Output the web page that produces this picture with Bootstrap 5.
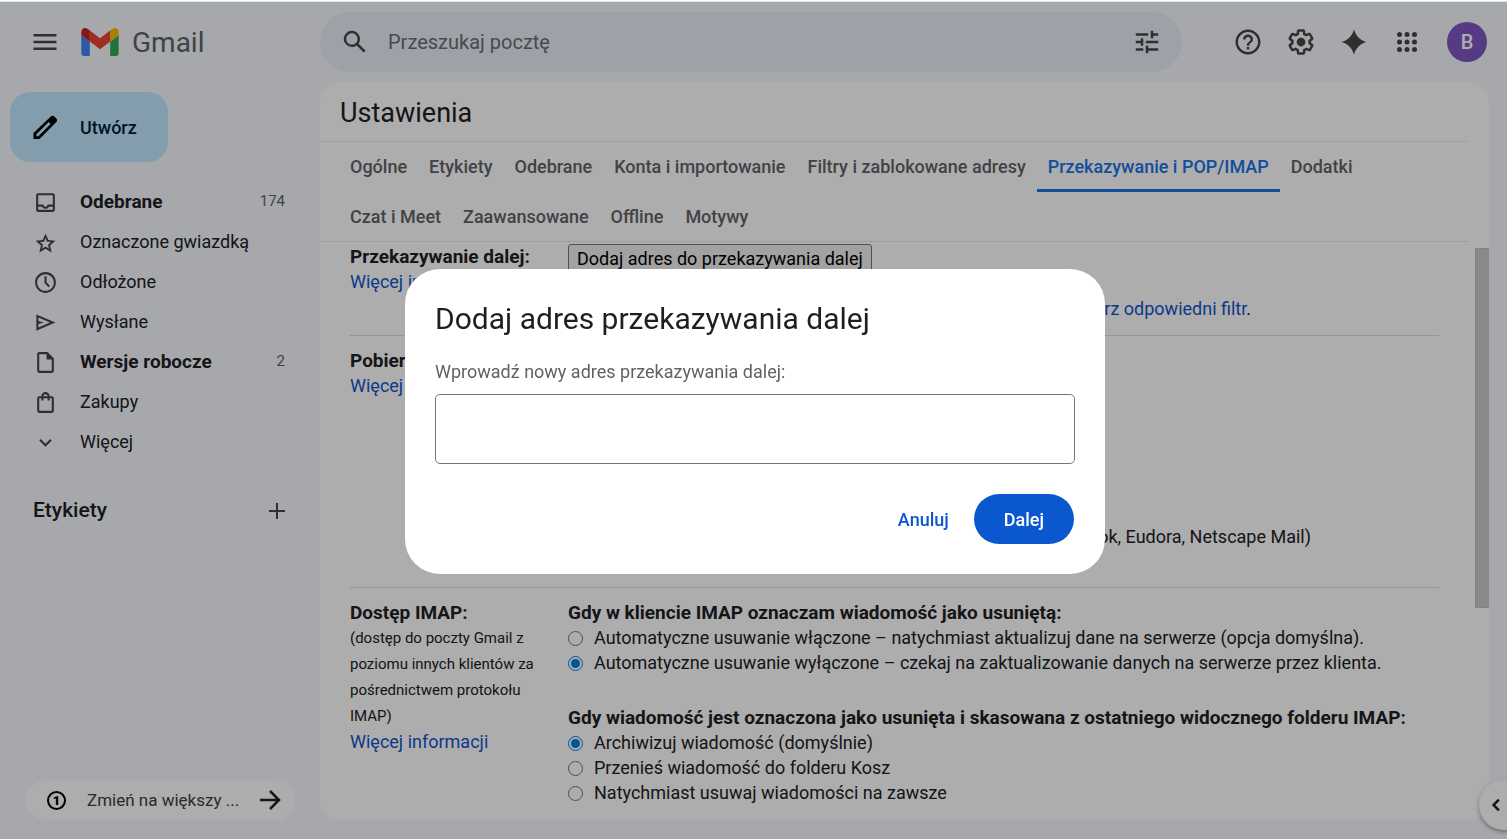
<!DOCTYPE html>
<html lang="pl">
<head>
<meta charset="utf-8">
<meta name="viewport" content="width=device-width, initial-scale=1">
<title>Ustawienia – Gmail</title>
<link href="https://cdn.jsdelivr.net/npm/bootstrap@5.3.0/dist/css/bootstrap.min.css" rel="stylesheet">
<style>
  body { font-family: Roboto, "Liberation Sans", sans-serif; font-size: 18px; line-height: 25px; color: #202124; background: #f6f8fc; }
  svg { display: block; flex: none; fill: currentColor; }
  a { text-decoration: none; }
  b { font-size: 19px; }
  .shrinkable { min-width: 0; min-height: 0; }
  .window-edge { height: 2px; background: #fff; border-bottom: 1px solid #dfe5e4; position: relative; z-index: 1100; }
  .app-header { height: 80px; color: #444746; }
  .side-width { width: 320px; flex: none; }
  .tools-width { width: 325px; flex: none; }
  .tools { gap: 3px; }
  .icon-btn { border: 0; background: none; padding: 10px; color: inherit; }
  .menu-btn { padding: 4px; margin: 0 15px 0 24px; }
  .brand { gap: 13px; }
  .brand-name { font-size: 28px; line-height: 32px; padding-top: 2px; color: #5f6368; }
  .search-bar { height: 60px; background: #eaedf9; border-radius: 30px; padding: 0 10px; }
  .search-bar input { border: 0; background: none; font-size: 20px; color: #444746; outline: 0; }
  .search-bar input::placeholder { color: #6a6d70; opacity: 1; }
  .avatar { width: 40px; height: 40px; background: #7e57c2; color: #fff; font-size: 20px; font-weight: 500; border: 0; margin-left: 12px; }
  .compose { width: 158px; height: 70px; margin: 10px 0 20px 10px; gap: 20px; border: 0; border-radius: 20px; background: #c2e7ff; color: #001d35; font-weight: 500; padding: 0 20px; }
  .folder { height: 40px; gap: 22px; color: #202124; padding: 0 35px 0 33px; }
  .folder span { padding-bottom: 2px; }
  .folder svg { color: #444746; }
  .folder.fw-bold { font-size: 19px; }
  .folder .count { font-size: 15px; font-weight: 400; color: #5f6368; }
  .labels-row { margin-top: 29px; }
  .labels-heading { font-size: 21px; font-weight: 500; }
  .upgrade { height: 40px; margin: 0 25px 19px 26px; padding: 0 13px 0 21px; gap: 21px; border: 0; border-radius: 20px; background: #fff; color: #3c4043; font-size: 17px; }
  .upgrade svg { margin-left: -10px; }
  .ring { flex: none; width: 19px; height: 19px; border: 2px solid #000; color: #000; font-size: 13px; line-height: 15px; font-weight: 900; }
  .panel { background: #fff; border-radius: 20px; margin: 0 18px 19px 0; }
  .panel-title { font-size: 27px; line-height: 55px; font-weight: 400; padding: 4px 0 0 20px; border-bottom: 1px solid #e8eaed; margin-right: 22px; }
  .tabs { padding: 0 19px; margin-right: 20px; box-shadow: inset 0 -1px #e8eaed; }
  .tabs a { height: 50px; line-height: 50px; padding: 0 11px; color: #5f6368; font-weight: 500; }
  .tabs a.active { color: #1a73e8; box-shadow: inset 0 -3px #1a73e8; }
  .settings { padding-left: 30px; }
  .setting { padding: 12px 0; border-bottom: 1px solid #dadce0; }
  .setting:first-child { padding: 2px 0 14px; }
  .setting:last-child { border: 0; }
  .setting-name { width: 218px; flex: none; padding-right: 28px; }
  .setting a { color: #1155cc; }
  .tip { width: 683px; }
  .pop-body { width: 743px; min-height: 227px; padding-bottom: 26px; }
  .note { font-size: 15px; line-height: 26px; }
  .add-address { height: 28px; padding: 0 8px; border: 1px solid #767676; border-radius: 3px; background: #efefef; color: #000; }
  .option input { width: 15px; height: 15px; margin: 2px 11px 0 0; accent-color: #007fdb; }
  .option-group { margin-top: 30px; }
  .scroll-track { width: 14px; flex: none; margin-left: 36px; padding-top: 6px; }
  .scroll-thumb { height: 63%; background: #cbcbcb; border: solid #c0c0c0; border-width: 1px 0 1px 1px; }
  .panel-toggle { position: fixed; right: -22px; bottom: 9px; width: 50px; height: 50px; border: 0; background: #fff; color: #202124; box-shadow: 0 2px 4px rgba(0,0,0,.35); padding: 0 0 0 5px; }
  .modal-backdrop { --bs-backdrop-opacity: .32; }
  .modal { padding: 4px 0 0 3px; }
  .modal-dialog { max-width: 700px; }
  .modal-content { border: 0; border-radius: 35px; padding: 30px; color: #1f1f1f; }
  .modal-title { font-size: 30px; line-height: 40px; font-weight: 400; }
  .modal label { color: #5f6368; margin: 20px 0 10px; }
  .modal .form-control { height: 70px; border: 1px solid #747775; border-radius: 5px; font-size: 20px; }
  .dialog-buttons { margin-top: 30px; padding-right: 1px; }
  .cancel, .confirm { height: 50px; border: 0; border-radius: 25px; font-weight: 500; }
  .cancel { background: none; color: #0b57d0; padding: 0 25px; }
  .confirm { background: #0b57d0; color: #fff; padding: 0 30px; }
</style>
</head>
<body class="overflow-hidden">
<div class="vh-100 d-flex flex-column">
  <div class="window-edge"></div>
  <header class="app-header d-flex align-items-center flex-shrink-0">
    <div class="side-width d-flex align-items-center">
      <button class="icon-btn menu-btn" aria-label="Menu główne"><svg width="34" height="30" viewBox="0 0 34 30"><path d="M5.500 7h23v2.500h-23zM5.500 13.700h23v2.500h-23zM5.500 20.400h23v2.500h-23z"/></svg></button>
      <a href="#" class="brand d-flex align-items-center">
        <svg width="38" height="28" viewBox="52 42 88 66"><path fill="#4285f4" d="M58 108h14V74L52 59v43c0 3.320 2.690 6 6 6"/><path fill="#34a853" d="M120 108h14c3.320 0 6-2.690 6-6V59l-20 15"/><path fill="#fbbc04" d="M120 48v26l20-15v-8c0-7.420-8.470-11.650-14.400-7.200"/><path fill="#ea4335" d="M72 74V48l24 18 24-18v26L96 92"/><path fill="#c5221f" d="M52 51v8l20 15V48l-5.600-4.200c-5.940-4.450-14.400-.22-14.400 7.200"/></svg>
        <span class="brand-name">Gmail</span>
      </a>
    </div>
    <form class="search-bar d-flex align-items-center flex-grow-1">
      <button type="button" class="icon-btn" aria-label="Szukaj"><svg width="30" height="30" viewBox="0 0 24 24"><path d="M20.490 19l-5.730-5.730C15.530 12.200 16 10.910 16 9.500A6.500 6.500 0 1 0 9.500 16c1.410 0 2.700-.47 3.770-1.240L19 20.490 20.490 19zM5 9.500C5 7.010 7.010 5 9.500 5S14 7.010 14 9.500 11.990 14 9.500 14 5 11.990 5 9.500z"/></svg></button>
      <input class="flex-grow-1 p-0 ms-2" type="text" placeholder="Przeszukaj pocztę" aria-label="Przeszukaj pocztę">
      <button type="button" class="icon-btn" aria-label="Opcje wyszukiwania"><svg width="30" height="30" viewBox="0 0 24 24"><path d="M3 17v2h6v-2H3zM3 5v2h10V5H3zm10 16v-2h8v-2h-8v-2h-2v6h2zM7 9v2H3v2h4v2h2V9H7zm14 4v-2H11v2h10zm-6-4h2V7h4V5h-4V3h-2v6z"/></svg></button>
    </form>
    <div class="tools-width d-flex align-items-center justify-content-end pe-3">
      <div class="tools d-flex me-1">
        <button class="icon-btn" aria-label="Pomoc"><svg width="30" height="30" viewBox="0 0 24 24"><path d="M11 18h2v-2h-2v2zm1-16C6.480 2 2 6.480 2 12s4.480 10 10 10 10-4.480 10-10S17.520 2 12 2zm0 18c-4.410 0-8-3.590-8-8s3.590-8 8-8 8 3.590 8 8-3.590 8-8 8zm0-14c-2.210 0-4 1.790-4 4h2c0-1.100.9-2 2-2s2 .9 2 2c0 2-3 1.750-3 5h2c0-2.250 3-2.500 3-5 0-2.210-1.790-4-4-4z"/></svg></button>
        <button class="icon-btn" aria-label="Ustawienia"><svg width="30" height="30" viewBox="0 0 24 24"><path d="M13.850 22.250h-3.700c-.74 0-1.360-.54-1.450-1.270l-.27-1.890c-.27-.14-.53-.29-.79-.46l-1.800.72c-.7.26-1.470-.03-1.810-.65L2.200 15.530c-.35-.66-.2-1.440.36-1.880l1.530-1.190c-.01-.15-.02-.3-.02-.46 0-.15.01-.31.02-.46l-1.520-1.190c-.59-.45-.74-1.260-.37-1.880l1.850-3.190c.34-.62 1.110-.9 1.790-.63l1.810.73c.26-.17.52-.32.78-.46l.27-1.910c.09-.7.71-1.250 1.440-1.250h3.700c.74 0 1.360.54 1.450 1.270l.27 1.890c.27.14.53.29.79.46l1.800-.72c.71-.26 1.480.03 1.820.65l1.840 3.180c.36.66.2 1.440-.36 1.880l-1.520 1.190c.01.15.02.3.02.46s-.01.31-.02.46l1.520 1.190c.56.45.72 1.230.37 1.860l-1.860 3.220c-.34.62-1.110.9-1.800.63l-1.800-.72c-.26.17-.52.32-.78.46l-.27 1.910c-.1.68-.72 1.220-1.460 1.220zm-3.230-2h2.760l.37-2.550.53-.22c.44-.18.88-.44 1.340-.78l.45-.34 2.380.96 1.380-2.400-2.030-1.580.07-.56c.03-.26.06-.51.06-.78s-.03-.53-.06-.78l-.07-.56 2.030-1.580-1.390-2.400-2.390.96-.45-.35c-.42-.32-.87-.58-1.330-.77l-.52-.22-.37-2.550h-2.760l-.37 2.550-.53.21c-.44.19-.88.44-1.340.79l-.45.33-2.380-.95-1.390 2.390 2.030 1.580-.07.56a7 7 0 0 0-.06.79c0 .26.02.53.06.78l.07.56-2.030 1.580 1.380 2.400 2.390-.96.45.35c.43.33.86.58 1.330.77l.53.22.38 2.550z"/><circle cx="12" cy="12" r="3.500"/></svg></button>
        <button class="icon-btn" aria-label="Gemini"><svg width="30" height="30" viewBox="0 0 24 24"><path d="M12 2c1.500 5.200 4.800 8.500 10 10-5.200 1.500-8.500 4.800-10 10-1.500-5.200-4.800-8.500-10-10 5.200-1.500 8.500-4.800 10-10z"/></svg></button>
        <button class="icon-btn" aria-label="Aplikacje Google"><svg width="30" height="30" viewBox="0 0 24 24"><circle cx="6" cy="6" r="2"/><circle cx="12" cy="6" r="2"/><circle cx="18" cy="6" r="2"/><circle cx="6" cy="12" r="2"/><circle cx="12" cy="12" r="2"/><circle cx="18" cy="12" r="2"/><circle cx="6" cy="18" r="2"/><circle cx="12" cy="18" r="2"/><circle cx="18" cy="18" r="2"/></svg></button>
        <button class="avatar rounded-circle p-0 align-self-center">B</button>
      </div>
    </div>
  </header>

  <div class="d-flex flex-grow-1 shrinkable">
    <aside class="side-width d-flex flex-column">
      <button class="compose d-flex align-items-center"><svg width="30" height="30" viewBox="0 0 30 30" class="text-black"><path fill-rule="evenodd" d="M3.500 27v-6L20.800 4.400c1-.9 2.500-.9 3.500 0l2 2c1 1 1 2.500 0 3.500L9.500 27zM6.400 24.300h1.900L20.700 11.900l-2-1.900L6.400 22.200z"/></svg><span>Utwórz</span></button>
      <nav>
        <a class="folder d-flex align-items-center fw-bold" href="#"><svg width="25" height="25" viewBox="0 0 24 24"><path d="M19 3H5c-1.100 0-2 .9-2 2v14c0 1.100.9 2 2 2h14c1.100 0 2-.9 2-2V5c0-1.100-.9-2-2-2zm0 16H5v-3h3.560c.69 1.190 1.970 2 3.450 2s2.750-.81 3.450-2H19v3zm0-5h-4.990c0 1.100-.9 2-2 2s-2-.9-2-2H5V5h14v9z"/></svg><span class="me-auto">Odebrane</span><span class="count">174</span></a>
        <a class="folder d-flex align-items-center" href="#"><svg width="25" height="25" viewBox="0 0 24 24"><path d="M21.500 10.300l-6.700-.6L12 3.500 9.200 9.700l-6.700.6 5.100 4.500L6.100 21.500 12 18l5.900 3.500-1.500-6.700 5.100-4.500zM12 15.900l-3.300 2 .9-3.800-2.900-2.600 3.900-.3L12 7.600l1.400 3.600 3.900.3-2.900 2.600.9 3.800L12 15.900z"/></svg><span>Oznaczone gwiazdką</span></a>
        <a class="folder d-flex align-items-center" href="#"><svg width="25" height="25" viewBox="0 0 24 24"><path d="M11.990 2C6.470 2 2 6.480 2 12s4.470 10 9.990 10C17.520 22 22 17.520 22 12S17.520 2 11.990 2zM12 20c-4.420 0-8-3.580-8-8s3.580-8 8-8 8 3.580 8 8-3.580 8-8 8z"/><path d="M13 6h-2v6.400l3.800 4.200 1.500-1.300L13 11.700z"/></svg><span>Odłożone</span></a>
        <a class="folder d-flex align-items-center" href="#"><svg width="25" height="25" viewBox="0 0 24 24"><path d="M3.200 19.800V4.200L21.500 12 3.200 19.800zM5.200 16.700L16.200 12 5.200 7.300v3.200l5.300 1.500-5.300 1.500v3.200z"/></svg><span>Wysłane</span></a>
        <a class="folder d-flex align-items-center fw-bold" href="#"><svg width="25" height="25" viewBox="0 0 24 24"><path d="M14 2H6c-1.100 0-2 .9-2 2v16c0 1.100.9 2 2 2h12c1.100 0 2-.9 2-2V8l-6-6zM6 20V4h7v5h5v11H6z"/></svg><span class="me-auto">Wersje robocze</span><span class="count">2</span></a>
        <a class="folder d-flex align-items-center" href="#"><svg width="25" height="25" viewBox="0 0 24 24"><path d="M18 6h-2c0-2.210-1.790-4-4-4S8 3.790 8 6H6c-1.100 0-2 .9-2 2v12c0 1.100.9 2 2 2h12c1.100 0 2-.9 2-2V8c0-1.100-.9-2-2-2zm-6-2c1.100 0 2 .9 2 2h-4c0-1.100.9-2 2-2zm6 16H6V8h2v2h2V8h4v2h2V8h2v12z"/></svg><span>Zakupy</span></a>
        <a class="folder d-flex align-items-center" href="#"><svg width="25" height="25" viewBox="0 0 24 24"><path d="M7.410 8.590L12 13.170l4.590-4.580L18 10l-6 6-6-6z"/></svg><span>Więcej</span></a>
      </nav>
      <div class="folder labels-row d-flex align-items-center justify-content-between"><h2 class="labels-heading m-0">Etykiety</h2><button class="icon-btn p-0" aria-label="Utwórz nową etykietę"><svg width="16" height="16" viewBox="0 0 16 16"><path d="M7 0h2v7h7v2H9v7H7V9H0V7h7z"/></svg></button></div>
      <button class="upgrade d-flex align-items-center mt-auto"><span class="ring rounded-circle">1</span><span class="me-auto text-nowrap">Zmień na większy ...</span><svg width="24" height="24" viewBox="0 0 24 24"><path d="M2 12h18M12 3l9 9-9 9" fill="none" stroke="#202124" stroke-width="2.500"/></svg></button>
    </aside>

    <main class="panel flex-grow-1 d-flex flex-column overflow-hidden shrinkable">
      <h1 class="panel-title mb-0">Ustawienia</h1>
      <nav class="tabs d-flex flex-wrap">
        <a href="#">Ogólne</a><a href="#">Etykiety</a><a href="#">Odebrane</a><a href="#">Konta i importowanie</a><a href="#">Filtry i zablokowane adresy</a><a href="#" class="active">Przekazywanie i POP/IMAP</a><a href="#">Dodatki</a><a href="#">Czat i Meet</a><a href="#">Zaawansowane</a><a href="#">Offline</a><a href="#">Motywy</a>
      </nav>
      <div class="d-flex flex-grow-1 shrinkable">
        <div class="settings flex-grow-1 shrinkable">
          <section class="setting d-flex">
            <div class="setting-name"><b>Przekazywanie dalej:</b><br><a href="#">Więcej informacji</a></div>
            <div><button class="add-address d-block mb-4">Dodaj adres do przekazywania dalej</button>
              <div class="tip text-end"><a href="#">utwórz odpowiedni filtr</a>.</div></div>
          </section>
          <section class="setting d-flex">
            <div class="setting-name"><b>Pobieranie POP:</b><br><a href="#">Więcej informacji</a></div>
            <div class="pop-body d-flex align-items-end justify-content-end">Outlook, Eudora, Netscape Mail)</div>
          </section>
          <section class="setting d-flex">
            <div class="setting-name"><b>Dostęp IMAP:</b><div class="note">(dostęp do poczty Gmail z poziomu innych klientów za pośrednictwem protokołu IMAP)</div><a href="#">Więcej informacji</a></div>
            <div>
              <b class="d-block">Gdy w kliencie IMAP oznaczam wiadomość jako usuniętą:</b>
              <div class="option d-flex align-items-center"><input type="radio" name="expunge" id="ex1"><label for="ex1">Automatyczne usuwanie włączone – natychmiast aktualizuj dane na serwerze (opcja domyślna).</label></div>
              <div class="option d-flex align-items-center"><input type="radio" name="expunge" id="ex2" checked><label for="ex2">Automatyczne usuwanie wyłączone – czekaj na zaktualizowanie danych na serwerze przez klienta.</label></div>
              <b class="option-group d-block">Gdy wiadomość jest oznaczona jako usunięta i skasowana z ostatniego widocznego folderu IMAP:</b>
              <div class="option d-flex align-items-center"><input type="radio" name="deleted" id="de1" checked><label for="de1">Archiwizuj wiadomość (domyślnie)</label></div>
              <div class="option d-flex align-items-center"><input type="radio" name="deleted" id="de2"><label for="de2">Przenieś wiadomość do folderu Kosz</label></div>
              <div class="option d-flex align-items-center"><input type="radio" name="deleted" id="de3"><label for="de3">Natychmiast usuwaj wiadomości na zawsze</label></div>
            </div>
          </section>
        </div>
        <div class="scroll-track"><div class="scroll-thumb"></div></div>
      </div>
    </main>
  </div>
</div>
<button class="panel-toggle rounded-circle" aria-label="Pokaż panel boczny"><svg width="24" height="24" viewBox="0 0 24 24"><path d="M15.800 7.500 11.300 12l4.500 4.500L14 18.200 7.800 12 14 5.800z"/></svg></button>

<div class="modal-backdrop show"></div>
<div class="modal show d-block" role="dialog" aria-modal="true" aria-labelledby="dialogTitle">
  <div class="modal-dialog modal-dialog-centered m-auto h-100">
    <form class="modal-content">
      <h2 class="modal-title" id="dialogTitle">Dodaj adres przekazywania dalej</h2>
      <label for="address">Wprowadź nowy adres przekazywania dalej:</label>
      <input type="email" class="form-control" id="address">
      <div class="dialog-buttons d-flex justify-content-end"><button type="button" class="cancel">Anuluj</button><button type="button" class="confirm">Dalej</button></div>
    </form>
  </div>
</div>
<script src="https://cdn.jsdelivr.net/npm/bootstrap@5.3.0/dist/js/bootstrap.bundle.min.js"></script>
</body>
</html>
